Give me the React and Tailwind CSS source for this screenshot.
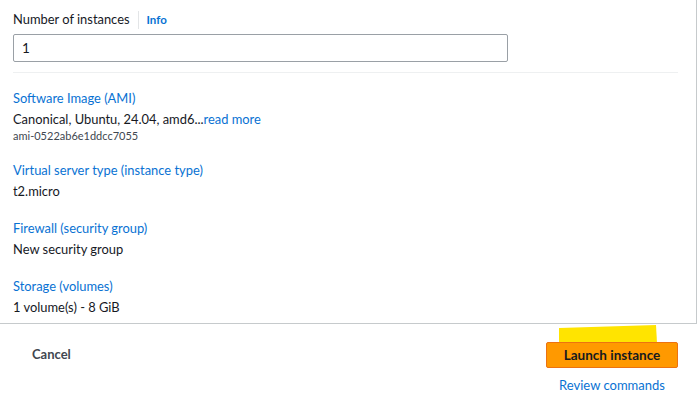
export default function App() {
  const font = { fontFamily: 'Lato, "Liberation Sans", Arial, sans-serif' };
  return (
    <div className="w-[700px] h-[398px] bg-white overflow-hidden text-[#16191f]" style={font}>
      <div className="w-[697px] h-[324px] border-r border-b border-[#c6cacc] pl-[13px] pr-[18px] pt-[10px]">
        <div className="flex items-center h-[20px] text-[12.9px]">
          <span>Number of instances</span>
          <span className="mx-[8px] h-[18px] w-px bg-[#e3e5e7]"></span>
          <span className="text-[11.5px] font-bold text-[#0972d3]">Info</span>
        </div>
        <div className="mt-[4px] w-[495px] h-[28px] border border-[#9aa0a6] rounded-[2px] flex items-center px-[8px] text-[13.5px]">1</div>
        <div className="mt-[10px] h-px bg-[#eef0f1]"></div>

        <div className="mt-[15px] text-[12.9px] leading-[20px] text-[#0972d3]">Software Image (AMI)</div>
        <div className="mt-[1px] text-[12.9px] leading-[20px]">Canonical, Ubuntu, 24.04, amd6...<span className="text-[#0972d3]">read more</span></div>
        <div className="text-[11px] leading-[14px] text-[#414750]">ami-0522ab6e1ddcc7055</div>

        <div className="mt-[17px] text-[12.9px] leading-[20px] text-[#0972d3]">Virtual server type (instance type)</div>
        <div className="mt-[1px] text-[12.9px] leading-[20px]">t2.micro</div>

        <div className="mt-[17px] text-[12.9px] leading-[20px] text-[#0972d3]">Firewall (security group)</div>
        <div className="mt-[1px] text-[12.9px] leading-[20px]">New security group</div>

        <div className="mt-[17px] text-[12.9px] leading-[20px] text-[#0972d3]">Storage (volumes)</div>
        <div className="mt-[1px] text-[12.9px] leading-[20px]">1 volume(s) - 8 GiB</div>
      </div>
      <div className="flex justify-between pl-[32px] pr-[22px] pt-[18px]">
        <div className="mt-[3px] text-[13px] font-bold text-[#414750]">Cancel</div>
        <div className="flex flex-col items-center">
          <div className="relative">
            <svg className="absolute left-[13px] top-[-17px]" width="98" height="18" viewBox="0 0 98 18">
              <polygon points="0,3 97,0 98,18 0,18" fill="#ffe400" />
            </svg>
            <div className="relative w-[132px] h-[26px] bg-[#ff9900] border border-[#ec7211] rounded-[2px] flex items-center justify-center text-[13.5px] font-bold text-[#16191f]">Launch instance</div>
          </div>
          <div className="mt-[8px] text-[13px] text-[#0972d3]">Review commands</div>
        </div>
      </div>
    </div>
  );
}
